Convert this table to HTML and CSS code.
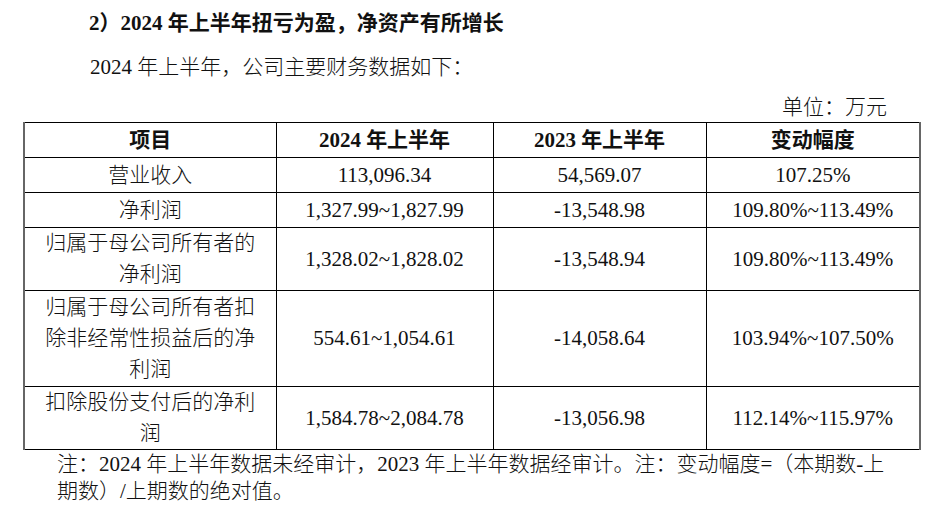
FILE: index.html
```html
<!DOCTYPE html>
<html lang="zh-CN">
<head>
<meta charset="utf-8">
<title>2024年上半年主要财务数据</title>
<link rel="stylesheet" href="styles.css">
</head>
<body>
<div class="page">
  <h2 class="heading">2）2024 年上半年扭亏为盈，净资产有所增长</h2>
  <p class="intro">2024 年上半年，公司主要财务数据如下：</p>
  <p class="unit">单位：万元</p>
  <table class="fin">
    <colgroup>
      <col class="c1"><col class="c2"><col class="c3"><col class="c4">
    </colgroup>
    <thead>
      <tr class="r1">
        <th>项目</th>
        <th>2024 年上半年</th>
        <th>2023 年上半年</th>
        <th>变动幅度</th>
      </tr>
    </thead>
    <tbody>
      <tr class="r1">
        <td>营业收入</td>
        <td>113,096.34</td>
        <td>54,569.07</td>
        <td>107.25%</td>
      </tr>
      <tr class="r1">
        <td>净利润</td>
        <td>1,327.99~1,827.99</td>
        <td>-13,548.98</td>
        <td>109.80%~113.49%</td>
      </tr>
      <tr class="r2">
        <td>归属于母公司所有者的<br>净利润</td>
        <td>1,328.02~1,828.02</td>
        <td>-13,548.94</td>
        <td>109.80%~113.49%</td>
      </tr>
      <tr class="r3">
        <td>归属于母公司所有者扣<br>除非经常性损益后的净<br>利润</td>
        <td>554.61~1,054.61</td>
        <td>-14,058.64</td>
        <td>103.94%~107.50%</td>
      </tr>
      <tr class="r2">
        <td>扣除股份支付后的净利<br>润</td>
        <td>1,584.78~2,084.78</td>
        <td>-13,056.98</td>
        <td>112.14%~115.97%</td>
      </tr>
    </tbody>
  </table>
  <p class="note">注：2024 年上半年数据未经审计，2023 年上半年数据经审计。注：变动幅度=（本期数-上期数）/上期数的绝对值。</p>
</div>
</body>
</html>
```
FILE: styles.css
```css
html, body {
  margin: 0;
  padding: 0;
  background: #fff;
}

body {
  font-family: "Liberation Serif", "Noto Sans CJK SC", serif;
  font-size: 21px;
  font-weight: 300;
  color: #111;
}

.page {
  width: 928px;
  height: 507px;
  overflow: hidden;
  padding-top: 8px;
  box-sizing: border-box;
}

.heading {
  margin: 0;
  padding-left: 89px;
  font-size: 21px;
  font-weight: bold;
  line-height: 30px;
}

.intro {
  margin: 14px 0 0;
  padding-left: 90px;
  line-height: 30px;
}

.unit {
  margin: 11px 0 0;
  padding-right: 41px;
  text-align: right;
  line-height: 29px;
}

.fin {
  margin-left: 23px;
  width: 896px;
  border-collapse: collapse;
  table-layout: fixed;
  border-left: 2px solid #666;
  border-right: 2px solid #666;
}

.c1 { width: 252px; }
.c2 { width: 217px; }
.c3 { width: 213px; }
.c4 { width: 214px; }

.fin th,
.fin td {
  border: 1px solid #000;
  padding: 0 4px;
  text-align: center;
  vertical-align: middle;
  line-height: 31px;
  font-size: 21px;
}

.fin th {
  font-weight: bold;
}

.fin .r1 { height: 35px; }
.fin .r2 { height: 63px; }
.fin .r3 { height: 96px; }

.fin th:first-child,
.fin td:first-child {
  border-left: 2px solid #666;
}

.fin th:last-child,
.fin td:last-child {
  border-right: 2px solid #666;
}

.note {
  margin: 1px 0 0;
  padding-left: 57px;
  padding-right: 33px;
  line-height: 27px;
}
```
